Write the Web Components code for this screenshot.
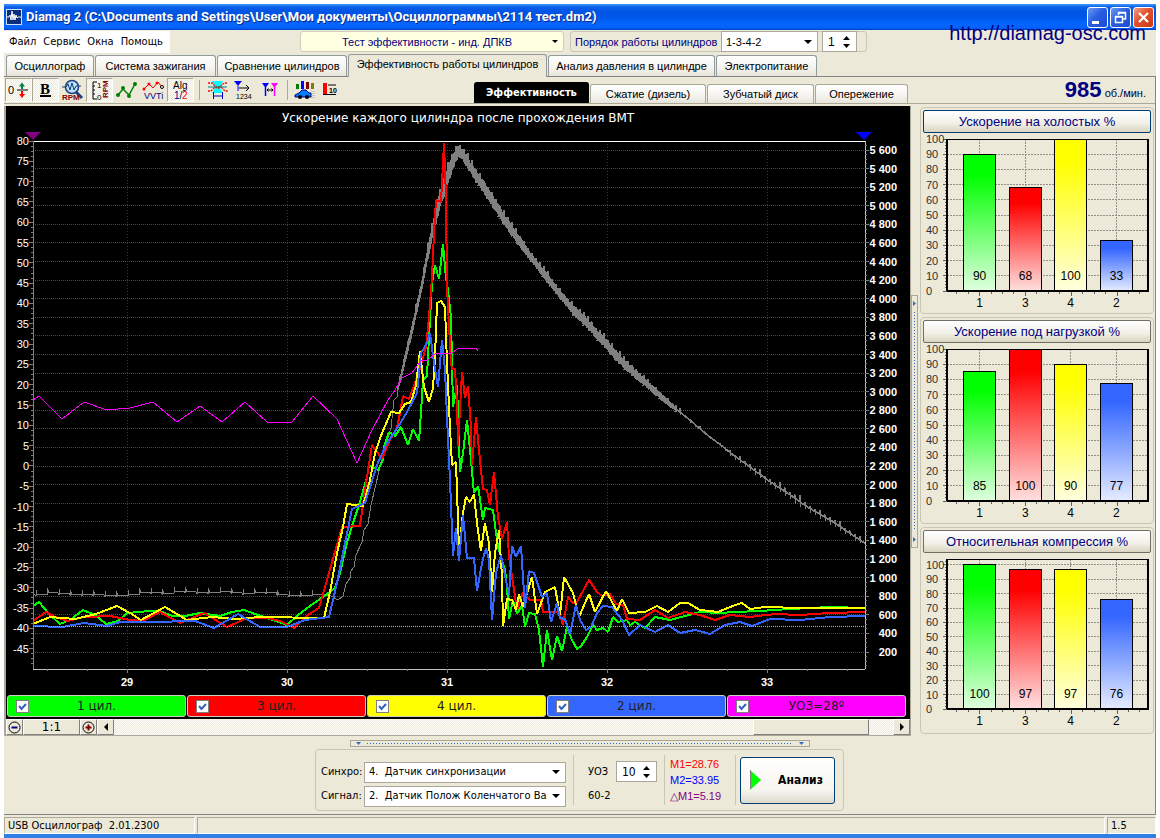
<!DOCTYPE html>
<html lang="ru">
<head>
<meta charset="utf-8">
<title>Diamag 2</title>
<style>
  html, body { margin: 0; background: #fff; }
  body {
    --face: #ece9d8; --line: #aca899; --navy: #000080;
    --tahoma: "DejaVu Sans Condensed", "DejaVu Sans", sans-serif;
    --sans: "Liberation Sans", Arial, sans-serif;
    font: 11px/14px var(--sans); color: #000;
  }
</style>
</head>
<body>
<diamag-app></diamag-app>

<script>
function define(name, css, html, setup) {
  const tpl = document.createElement('template');
  tpl.innerHTML = `<style>*,*::before,*::after{box-sizing:border-box}
    button,select,input{font:inherit;color:inherit;margin:0}
    :host{box-sizing:border-box;display:block}${css}</style>${html}`;
  customElements.define(name, class extends HTMLElement {
    connectedCallback() {
      if (this.shadowRoot) return;
      this.attachShadow({ mode: 'open' }).append(tpl.content.cloneNode(true));
      if (setup) setup(this, this.shadowRoot);
    }
  });
}

/* ---------- title bar ---------- */
define('title-bar', `
  :host{display:flex;align-items:center;gap:4px;height:26px;flex:none;padding:0 2px 0 2px;
    background:linear-gradient(#3f9bff 0,#0b5fe8 3px,#0054e3 8px,#0058ee 14px,#0566ff 20px,#0460f8 24px,#0041c4 26px)}
  .logo{width:16px;height:16px;flex:none}
  h1{flex:1;margin:0;font:bold 13px/18px Roboto,sans-serif;color:#fff;text-shadow:1px 1px 0 #0a2a86;white-space:nowrap;overflow:hidden}
  .btns{display:flex;gap:2px}
  button{width:21px;height:21px;padding:0;border:1px solid #fff;border-radius:3px;background:linear-gradient(135deg,#6c9cf5,#2a5fe0 45%,#1c4bd0)}
  button.close{background:linear-gradient(135deg,#f0a088,#e0502c 45%,#c83a14)}
  button svg{display:block;width:19px;height:19px}`, `
  <svg class="logo" viewBox="0 0 16 16" aria-hidden="true"><rect width="16" height="16" fill="#cfe0f4"/><rect x="1" y="1" width="14" height="14" fill="#0a2f7c"/>
    <path d="M1 8h2l1-2 1 5 1-9 1 9 1-6 1 6 1-5 1 3 1-1h3" fill="none" stroke="#fff" stroke-width="1"/></svg>
  <h1><slot></slot></h1>
  <div class="btns">
    <button aria-label="Свернуть"><svg viewBox="0 0 19 19"><path d="M4 13h7v3H4z" fill="#fff"/></svg></button>
    <button aria-label="Восстановить"><svg viewBox="0 0 19 19"><path d="M7.500 7V4.500h7V11H12M7 5h8M4.500 8.500h7v6h-7zM4 9h8" fill="none" stroke="#fff" stroke-width="1.500"/></svg></button>
    <button class="close" aria-label="Закрыть"><svg viewBox="0 0 19 19"><path d="M5 5l9 9M14 5l-9 9" stroke="#fff" stroke-width="2.200"/></svg></button>
  </div>`);

/* ---------- menu ---------- */
define('menu-bar', `
  :host{display:flex;align-items:center;gap:7px;height:22px;width:166px;padding:0 5px;background:#fff;font-family:var(--tahoma);flex:none}
  button{border:0;background:none;padding:0;line-height:14px;white-space:nowrap}`,
  `<button>Файл</button><button>Сервис</button><button>Окна</button><button>Помощь</button>`);

/* ---------- drop-down ---------- */
define('combo-box', `
  :host{display:flex;position:relative;height:21px;border:1px solid var(--line);background:var(--combo-bg,#fff)}
  :host([rounded]){border-color:#d0cdbd;border-radius:3px;color:var(--navy)}
  select{appearance:none;border:0;outline:0;border-radius:0;background:none;flex:1;min-width:0;height:100%;padding:0 18px 0 4px;text-align-last:var(--combo-align,left);white-space:pre}
  svg{position:absolute;right:5px;top:50%;width:8px;height:4px;margin-top:-2px;pointer-events:none}
  :host([rounded]) svg{width:6px;height:3px}
  :host([rounded]) select{padding-right:14px}`,
  `<select></select><svg viewBox="0 0 8 4" aria-hidden="true"><path d="M0 0h8L4 4z"/></svg>`,
  (host, root) => {
    const s = root.querySelector('select');
    s.append(new Option(host.getAttribute('value')));
    s.setAttribute('aria-label', host.getAttribute('label'));
  });

/* ---------- number box ---------- */
define('spin-box', `
  :host{display:flex;align-items:center;height:21px;border:1px solid var(--line);background:#fff}
  input{appearance:textfield;flex:1;min-width:0;border:0;outline:0;background:none;padding:0 0 0 5px;font-size:12px}
  input::-webkit-inner-spin-button{display:none}
  .arrows{display:flex;flex-direction:column;gap:4px;padding-right:6px}
  button{border:0;background:none;padding:0;width:7px;height:4px;display:block}
  svg{display:block;width:7px;height:4px}`,
  `<input type="number"><div class="arrows">
    <button aria-label="Больше"><svg viewBox="0 0 7 4"><path d="M0 4h7L3.500 0z"/></svg></button>
    <button aria-label="Меньше"><svg viewBox="0 0 7 4"><path d="M0 0h7L3.500 4z"/></svg></button></div>`,
  (host, root) => {
    const i = root.querySelector('input');
    i.value = host.getAttribute('value');
    i.setAttribute('aria-label', host.getAttribute('label'));
    const [up, down] = root.querySelectorAll('button');
    up.onclick = () => i.stepUp(); down.onclick = () => i.stepDown();
  });

/* ---------- tab ---------- */
define('tab-item', `
  :host{display:flex;align-self:flex-end;height:21px;flex:none}
  button{flex:1;border:1px solid #919b9c;border-bottom:0;border-radius:3px 3px 0 0;padding:0;background:linear-gradient(#fff,#f4f3ee 60%,#e6e4da);white-space:nowrap}
  :host([active]){height:23px;margin:0 0 -1px;position:relative;z-index:1}
  :host([active]) button{background:var(--face);padding-bottom:4px}
  :host([sub]){height:19px}
  :host([sub][active]){height:21px;margin:0}
  :host([sub]) button{border-color:var(--line)}
  :host([sub][active]) button{background:#000;color:#fff;font-family:"DejaVu Sans Condensed","DejaVu Sans",sans-serif;font-weight:bold;padding:0;border-color:#000}`,
  `<button role="tab"><slot></slot></button>`);

/* ---------- toolbar ---------- */
const ICONS = {
  offset: `<text x="2" y="15" font-size="11">0</text><path d="M11 11h11" stroke="#000"/><path d="M13 7.500l3-4 3 4z" fill="#008040"/><path d="M16 6v4" stroke="#008040" stroke-width="2"/><path d="M13 15l3 4 3-4z" fill="#f00"/><path d="M16 12v4" stroke="#f00" stroke-width="2"/>`,
  bold: `<text x="7" y="15" font-size="15" font-weight="bold" font-family="Liberation Serif,serif">B</text><path d="M7 17h11" stroke="#000" stroke-width="2"/>`,
  rpmZoom: `<circle cx="12" cy="8" r="6.500" fill="#b8e4ff" stroke="#204080" stroke-width="1.500"/><path d="M2 8h4l2-3 2 6 2-7 2 7 2-4h5" fill="none" stroke="#1a3a70"/><path d="M16 13l6 6" stroke="#204080" stroke-width="3"/><text x="2" y="21" font-size="8" fill="#800000" font-weight="bold">RPM</text>`,
  rpmAxis: `<path d="M10 3H6v17h4M6 7h2M6 11h2M6 15h2" fill="none" stroke="#000"/><text x="10" y="9" font-size="8">1</text><text x="10" y="21" font-size="8">0</text><text transform="translate(21 19) rotate(-90)" font-size="8" fill="#800000" font-weight="bold">RPM</text>`,
  points: `<path d="M4 16l5-6 6 6 6-11" fill="none" stroke="#008000" stroke-width="1.500"/><g fill="#008000"><circle cx="4" cy="16" r="2"/><circle cx="9" cy="9" r="2"/><circle cx="15" cy="17" r="2"/><circle cx="21" cy="5" r="2"/></g>`,
  vvti: `<path d="M3 10l5-5 4 4 5-6 4 5" fill="none" stroke="#f00"/><g fill="#f00"><circle cx="3" cy="10" r="1.500"/><circle cx="8" cy="5" r="1.500"/><circle cx="16" cy="4" r="1.500"/></g><circle cx="21" cy="8" r="1.500" fill="#fff" stroke="#000"/><text x="3" y="20" font-size="9" fill="#000080">VVTi</text>`,
  alg: `<text x="5" y="10" font-size="10">Alg</text><text x="6" y="20" font-size="10" fill="#000080">1/</text><text x="14" y="20" font-size="10" fill="#f00">2</text>`,
  phase: `<path d="M6 2h11l-3 7 3 5H6l3-5z" fill="#0ff"/><path d="M2 4h4l5 5h2l5-5h4M2 12h3l4-4h6l4 4h3" fill="none" stroke="#f00" stroke-width="1.300" stroke-dasharray="2 1"/><path d="M2 8h19" stroke="#008080"/><path d="M7.500 13v7M16.500 13v7M8 17h8" stroke="#0000c0" fill="none"/>`,
  cursor: `<path d="M1 2h8L5 7z" fill="#00f"/><path d="M5 7v5" stroke="#00f"/><path d="M6 9h10M13 6l3 3-3 3" fill="none" stroke="#000"/><text x="3" y="20" font-size="7">1234</text>`,
  cursors: `<path d="M2 4h7L5.500 9z" fill="#00f"/><path d="M5.500 8v9" stroke="#00f" stroke-width="1.500"/><path d="M11 4h7l-3.500 5z" fill="#f0f"/><path d="M14.500 8v9" stroke="#f0f" stroke-width="1.500"/><path d="M7 11h6M8.500 9.500L7 11l1.500 1.500M11.500 9.500L13 11l-1.500 1.500" fill="none" stroke="#000"/>`,
  car: `<path d="M2 5h3v5H2z" fill="#008000"/><path d="M7 2h3v8H7z" fill="#00f"/><path d="M12 3h3v7h-3z" fill="#800000"/><path d="M17 4h3v6h-3z" fill="#808000"/><path d="M1 16l4-2 3-3h4l3 3h2v4H1z" fill="#0080ff" stroke="#000080"/><circle cx="6" cy="18" r="2"/><circle cx="13" cy="18" r="2"/><path d="M18 12v7M20 12v7" stroke="#a0a0a0" stroke-dasharray="1 1"/>`,
  limit: `<path d="M2 4h4v11H2z" fill="#f00"/><path d="M7 6h8M2 15.500h13" stroke="#000"/><text x="8" y="14" font-size="7" font-weight="bold">10</text>`
};
define('tool-button', `
  :host{display:flex;width:27px;height:24px;flex:none}
  button{flex:1;border:1px solid transparent;padding:0;background:none}
  :host([pressed]) button{border-color:var(--line) #fff #fff var(--line);background:repeating-conic-gradient(#fff 0 25%,#ece9d8 0 50%) 0 0/2px 2px}
  svg{display:block;width:24px;height:22px;font-family:"Liberation Sans",sans-serif}`,
  `<button><svg viewBox="0 0 24 22" aria-hidden="true"></svg></button>`,
  (host, root) => {
    root.querySelector('svg').innerHTML = ICONS[host.getAttribute('icon')];
    const b = root.querySelector('button');
    b.setAttribute('aria-label', host.getAttribute('label'));
    b.setAttribute('aria-pressed', host.hasAttribute('pressed'));
  });

/* ---------- oscilloscope plot ---------- */
const CURVES = {
  green: ['#00ff00', '33,606 39,602 50,615 60,624 70,620 83,610 95,615 106,624 118,621 127,613 150,611 160,611 172,616 185,616 200,613 220,616 232,612 244,610 255,614 270,619 287,625 298,615 310,606 323,597 335,588 340,573 347,543 353,523 360,502 367,477 369,465 378,470 383,460 384,447 389,432 395,436 401,427 408,445 413,429 419,441 421,412 422,397 423,380 427,376 429,337 432,283 435,265 439,279 443,244 446,278 448,290 451,317 453,407 457,385 459,443 460,472 463,453 467,420 471,460 474,493 478,486 483,520 485,508 493,510 498,547 505,570 507,587 509,619 513,600 517,614 522,605 525,627 529,613 535,614 539,630 543,667 547,630 552,660 557,636 562,651 567,627 572,640 577,649 581,646 587,637 593,625 597,630 603,628 608,632 613,617 618,622 627,620 630,625 635,622 645,628 655,617 670,620 685,616 700,612 720,613 735,612 760,611 790,609 830,607 865,608'],
  red: ['#ff0000', '33,621 46,612 55,617 68,621 84,617 110,616 130,620 143,621 160,612 180,623 204,613 227,627 247,618 267,618 280,621 294,628 308,615 319,608 327,580 342,527 360,526 365,490 372,445 382,459 390,440 397,428 400,413 403,396 409,399 415,383 420,368 426,347 429,317 432,277 434,233 436,200 441,202 443,163 444,143 446,197 447,287 451,363 452,369 455,369 457,403 458,446 462,372 465,398 468,386 471,428 472,465 476,417 479,450 483,489 487,490 490,505 494,472 498,517 502,539 507,522 509,557 513,583 517,610 523,592 530,600 541,600 543,612 557,612 560,615 563,625 568,597 573,603 577,602 589,580 597,592 602,596 610,594 616,604 623,605 627,619 640,620 655,610 668,618 685,612 700,615 715,620 730,615 750,617 775,614 800,615 830,613 865,612'],
  yellow: ['#ffff00', '33,624 50,617 75,619 96,614 117,606 130,613 141,620 165,607 187,620 212,617 235,619 260,617 324,618 330,592 337,553 343,527 347,504 363,506 370,480 375,453 382,433 391,412 399,413 405,404 411,402 416,385 420,351 424,387 429,402 433,388 435,357 437,303 441,301 445,307 447,363 450,428 452,465 456,462 459,550 463,513 466,497 470,502 474,494 477,523 481,551 485,523 489,543 492,592 495,553 499,530 502,577 503,626 507,599 512,600 516,610 519,594 523,607 532,577 537,614 545,592 555,587 560,615 564,577 573,593 579,617 589,594 595,612 606,591 617,611 622,599 629,613 645,612 657,606 668,612 680,603 688,603 700,610 718,612 735,605 742,603 750,609 765,607 800,608 865,608'],
  blue: ['#3366ff', '33,626 62,627 84,623 107,626 120,622 150,622 195,621 214,628 238,614 260,627 287,627 305,620 329,617 337,583 345,543 352,509 365,503 377,465 387,443 398,427 407,412 417,393 421,353 427,343 430,333 434,363 438,387 442,340 445,370 447,417 450,480 453,556 456,528 459,561 463,515 467,558 474,558 477,591 482,563 486,548 489,560 492,620 496,573 501,555 509,595 512,546 516,557 521,546 525,608 529,571 534,573 542,597 547,593 551,622 557,603 560,618 565,619 570,634 576,605 580,620 586,630 591,627 597,613 603,606 612,607 622,620 629,635 640,625 655,632 668,625 680,633 695,630 710,634 725,625 740,622 752,626 770,619 800,620 830,617 865,616']
};
const TIMING = '33,400 39,396 62,419 84,402 107,410 130,408 153,402 177,422 200,406 222,422 245,402 267,422 292,422 313,396 337,419 357,463 372,430 388,400 395,390 402,378 412,373 421,361 428,360 436,353 452,353 457,349 463,348 467,349 476,348 478,351';

/* engine speed: idle teeth, ramp up, then a ripple that thins out on the way down */
function speedPath() {
  let p = '33,593 ';
  const base = [594,592,593,594,594,594,595,595,594,592,592,593,591,591,592,592,591,592,593,592,592,594,595,595,594];
  base.forEach((y, i) => { const x = 36 + i * 11.5; p += `${x},${y + 2} ${x},${y - 4} ${x + 1},${y} ${x + 5},${y + 1} ${x + 10},${y} `; });
  p += '331,596 338,600 343,596 346,584 350,578 351,571 354,567 356,555 362,542 364,530 368,524 371,505 376,484 380,466 386,445 391,428 394,400 397,397 ';
  const c = [[398,388,3],[402,372,5],[407,350,6],[412,330,6],[417,307,7],[422,285,6],[427,257,8],[432,233,10],[437,210,12],[441,196,12],[447,178,12],[452,163,12],[458,151,9],[463,155,10],[470,167,10],[480,182,9],[490,197,10],[503,218,9],[520,243,9],[533,260,7],[547,278,8],[560,295,7],[573,310,8],[587,323,8],[599,337,8],[605,343,8],[620,360,8],[633,372,7],[650,387,6],[668,403,5],[687,418,3],[707,435,2],[723,447,2],[730,453,4],[747,465,5],[767,480,6],[790,495,7],[807,507,6],[833,522,6],[864,543,4]];
  let k = 0;
  for (let x = 398; x <= 864; x++) {
    while (x > c[k + 1][0]) k++;
    const [x0, y0, h0] = c[k], [x1, y1, h1] = c[k + 1], t = (x - x0) / (x1 - x0);
    const y = y0 + (y1 - y0) * t, h = h0 + (h1 - h0) * t;
    const noise = n => { const v = Math.sin(x * 12.9898 + n * 78.233) * 43758.5453; return v - Math.floor(v); };
    const thin = x > 676 && x % 5, spike = x % 4 === 0 ? 1 : 0.6;
    const up = thin ? 1 : h * spike * (0.7 + noise(1) * 0.4), dn = thin ? 1 : h * (0.5 + noise(2) * 0.3);
    p += `${x},${(y - up).toFixed(1)} ${x},${(y + dn).toFixed(1)} `;
  }
  return p;
}

define('scope-chart', `
  :host{display:flex;flex-direction:column;background:#000;color:#fff;min-height:300px}
  h2{margin:0;font:12px/24px "DejaVu Sans",sans-serif;text-align:center;flex:none}
  .area{flex:1;min-height:0;margin:11px 45px 26px 27px;display:flex;position:relative}
  svg.plot{position:absolute;inset:0;width:100%;height:100%;overflow:visible;font:11px "Liberation Sans",sans-serif}
  line{shape-rendering:crispEdges}
  .r{font-weight:bold}`,
  `<h2><slot></slot></h2><div class="area"><svg class="plot" role="img"></svg></div>`,
  (host, root) => {
    let s = '';
    const line = (x1, y1, x2, y2, c, extra = '') => `<line x1="${x1}" y1="${y1}" x2="${x2}" y2="${y2}" stroke="${c}" ${extra}/>`;
    const X0 = 28.4125, XR = 5.2;
    for (let v = 29; v <= 33; v++) s += line((v - X0) / XR * 100 + '%', 0, (v - X0) / XR * 100 + '%', '100%', '#383838', 'stroke-dasharray="1 2"');
    for (let v = 200; v <= 5600; v += 200) {
      const y = (511 - (v - 200) * 0.09296) / 528 * 100 + '%';
      s += line(0, y, '100%', y, '#484848', 'stroke-dasharray="1 1"');
    }
    s += '<svg x="0" y="0" width="100%" height="100%" viewBox="33 141 832 528" preserveAspectRatio="none">';
    const poly = (pts, c, w) => `<polyline points="${pts}" fill="none" stroke="${c}" stroke-width="${w}" vector-effect="non-scaling-stroke" stroke-linejoin="bevel" shape-rendering="crispEdges"/>`;
    s += poly(speedPath(), '#808080', 1);
    for (const k in CURVES) s += poly(CURVES[k][1], CURVES[k][0], 2);
    s += poly(TIMING, '#ff00ff', 1) + '</svg>';
    s += line(0, '92%', '100%', '92%', '#40e0e0', 'stroke-dasharray="1 1"');
    s += line(0, 0, '100%', 0, '#fff') + line(0, '100%', '100%', '100%', '#c0c0c0');
    s += line(0, 0, 0, '100%', '#40b040') + line('100%', 0, '100%', '100%', '#d0d040');
    for (let i = 0; i <= 104; i++) {
      const y = i / 104 * 100 + '%', major = i % 4 === 0;
      if (i < 104) s += line(major ? -4 : -2, y, 0, y, '#808080');
      if (major && i < 104) s += `<text x="-4" y="${y}" dy="4" text-anchor="end" fill="#fff">${80 - i / 4 * 5}</text>`;
    }
    for (let v = 50; v <= 5650; v += 50) {
      const y = (511 - (v - 200) * 0.09296) / 528 * 100 + '%', major = v % 200 === 0;
      s += `<svg x="100%" y="${y}" overflow="visible">${line(0, 0, major ? 4 : 2, 0, '#808080')}${major ? `<text class="r" x="32" y="4" text-anchor="end" fill="#fff">${String(v).replace(/(\d)(\d{3})$/, '$1 $2')}</text>` : ''}</svg>`;
    }
    for (let i = 0; i <= 20; i++) {
      const v = 28.5 + i * 0.25;
      const x = (v - X0) / XR * 100 + '%', major = v % 1 === 0;
      s += `<svg x="${x}" y="100%" overflow="visible">${line(0, 0, 0, major ? 4 : 2, '#808080')}${major ? `<text class="r" x="0" y="17" text-anchor="middle" fill="#fff">${v}</text>` : ''}</svg>`;
    }
    s += '<path d="M-8-9H8L0-1z" fill="#800080"/><svg x="100%" y="0" overflow="visible"><path d="M-9-9H7L-1-1z" fill="#00f"/></svg>';
    root.querySelector('svg').innerHTML = s;
  });

/* ---------- curve switch ---------- */
define('curve-toggle', `
  :host{flex:1;min-width:0}
  label{display:flex;align-items:center;height:22px;border:1px solid #d0cdc0;border-radius:3px;background:var(--c);padding:0 8px;font:12px/16px "DejaVu Sans",sans-serif;color:#202020}
  input{appearance:none;width:13px;height:13px;border:1px solid #808080;background:#fff;flex:none}
  input:checked{background:#fff url("data:image/svg+xml,%3Csvg xmlns='http://www.w3.org/2000/svg' viewBox='0 0 11 11'%3E%3Cpath d='M2 5l2.500 3L9 3' fill='none' stroke='%233060c0' stroke-width='2'/%3E%3C/svg%3E")}
  span{flex:1;text-align:center;padding-right:13px}`,
  `<label><input type="checkbox" checked><span><slot></slot></span></label>`);

/* ---------- scrollbar row ---------- */
define('time-scroller', `
  :host{display:flex;height:17px;border-bottom:1px solid var(--line);background:repeating-conic-gradient(#fff 0 25%,#ece9d8 0 50%) 0 0/2px 2px;flex:none}
  button{padding:0;height:16px;border:1px solid;border-color:#fff #808080 #808080 #fff;background:var(--face);width:17px;flex:none;display:grid;place-items:center}
  .ratio{width:57px;font:12px/14px "DejaVu Sans",sans-serif}
  .thumb{width:116px;margin-right:24px}.gap{flex:1}
  svg{display:block}`,
  `<button aria-label="Сжать"><svg width="13" height="13" viewBox="0 0 13 13"><circle cx="6.500" cy="6.500" r="5.500" fill="none" stroke="#000"/><path d="M3.500 6.500h6" stroke="#000080" stroke-width="2"/></svg></button>
   <button class="ratio">1:1</button>
   <button aria-label="Растянуть"><svg width="13" height="13" viewBox="0 0 13 13"><circle cx="6.500" cy="6.500" r="5.500" fill="none" stroke="#000"/><path d="M3.500 6.500h6M6.500 3.500v6" stroke="#800000" stroke-width="2"/></svg></button>
   <button aria-label="Влево"><svg width="4" height="8" viewBox="0 0 4 8"><path d="M4 0v8L0 4z"/></svg></button>
   <span class="gap"></span><button class="thumb" aria-label="Позиция"></button>
   <button aria-label="Вправо"><svg width="4" height="8" viewBox="0 0 4 8"><path d="M0 0v8l4-4z"/></svg></button>`);

/* ---------- collapsible splitter grips ---------- */
define('split-grip', `
  :host{display:flex;align-items:center;justify-content:space-between;gap:6px;border:1px solid var(--line);color:#316ac5}
  :host([vertical]){flex-direction:column;width:7px;height:253px;padding:5px 0}
  :host(:not([vertical])){height:7px;width:460px;padding:0 5px}
  i{flex:1;background:repeating-linear-gradient(90deg,#316ac5 0 1px,transparent 1px 3px);height:1px}
  :host([vertical]) i{background:repeating-linear-gradient(#316ac5 0 1px,transparent 1px 3px);width:1px;height:auto}
  svg{display:block;width:5px;height:5px;fill:#316ac5;overflow:visible}`,
  `<svg viewBox="0 0 5 5"><path/></svg><i></i><svg viewBox="0 0 5 5"><path/></svg>`,
  (host, root) => root.querySelectorAll('path').forEach(p =>
    p.setAttribute('d', host.hasAttribute('vertical') ? 'M1 0v5l3-2.500z' : 'M0 1h5L2.500 4z')));

/* ---------- bar chart card ---------- */
define('bar-panel', `
  :host{border:1px solid #c9c6b6;border-radius:4px;padding:2px;height:207px}
  button{display:block;width:100%;height:23px;border:1px solid var(--edge,#716f64);border-radius:2px;background:linear-gradient(#fff,#f1efe6 60%,#d9d5c0);color:var(--navy);font-size:13px;padding:0}
  .area{position:relative;height:var(--plot-h,152px);margin:6px 3px 0 24px}
  svg.plot{position:absolute;inset:0;width:100%;height:100%;overflow:visible;font:12px "Liberation Sans",sans-serif}
  .s{font-size:11px;fill:#303030}
  line{shape-rendering:crispEdges}`,
  `<button></button><div class="area"><svg class="plot" role="img"></svg></div>`,
  (host, root) => {
    root.querySelector('button').textContent = host.getAttribute('caption');
    const vals = host.getAttribute('values').split(',').map(Number), max = +host.getAttribute('max') || 100;
    const colors = ['#00ff00', '#ff0000', '#ffff00', '#3366ff'], ends = ['#e0ffe0', '#ffe0e0', '#ffffe0', '#e6ecff'];
    const cx = [16.2, 39, 61.5, 84.3], names = [1, 3, 4, 2];
    let s = '<defs>' + colors.map((c, i) => `<linearGradient id="g${i}" x2="0" y2="1"><stop stop-color="${c}"/><stop offset=".15" stop-color="${c}"/><stop offset="1" stop-color="${ends[i]}"/></linearGradient>`).join('') + '</defs>';
    for (let v = 0; v <= 100; v += 10) {
      const y = 100 - v / max * 100 + '%';
      if (v) s += `<line x1="0" x2="100%" y1="${y}" y2="${y}" stroke="#909088" stroke-dasharray="2 1"/>`;
      s += `<line x1="-4" x2="0" y1="${y}" y2="${y}" stroke="#606060"/><text class="s" x="-21" y="${y}" dy="4">${v}</text>`;
    }
    for (let v = 2; v < max; v += 2) { const y = 100 - v / max * 100 + '%'; s += `<line x1="-2" x2="0" y1="${y}" y2="${y}" stroke="#606060"/>`; }
    for (let i = 0; i < 17; i++) { const x = 4.800 + i * 5.700; if (x < 100) s += `<svg x="${x}%" y="100%" overflow="visible"><line y2="${i % 4 === 2 ? 5 : 3}" stroke="#606060"/></svg>`; }
    cx.forEach(x => s += `<line x1="${x}%" x2="${x}%" y1="0" y2="100%" stroke="#909088" stroke-dasharray="2 1"/>`);
    vals.forEach((v, i) => {
      const h = v / max * 100;
      s += `<rect x="${cx[i] - 8}%" width="16%" y="${100 - h}%" height="${h}%" fill="url(#g${i})" stroke="#000" shape-rendering="crispEdges"/>`;
      s += `<svg x="${cx[i]}%" y="100%" overflow="visible"><text y="-11" text-anchor="middle">${v}</text><text y="16" text-anchor="middle">${names[i]}</text></svg>`;
    });
    s += '<rect width="100%" height="100%" fill="none" stroke="#000" shape-rendering="crispEdges"/><line y2="100%" stroke="#000" stroke-width="2"/><line x1="100%" x2="100%" y2="100%" stroke="#000" stroke-width="2"/><line x2="100%" y1="100%" y2="100%" stroke="#000" stroke-width="2"/>';
    root.querySelector('svg').innerHTML = s;
  });

/* ---------- sync controls ---------- */
define('sync-box', `
  :host{display:flex;align-items:center;border:1px solid #c9c6b6;border-radius:4px;width:529px;height:62px;padding:0 8px 0 5px}
  .pairs{display:grid;grid-template-columns:40px 202px;gap:3px;align-items:center;font-family:var(--tahoma);margin-top:8px}
  hr{width:1px;height:50px;margin:0 4px 0 7px;border:0;background:#c9c6b6}
  .adv{display:grid;grid-template-columns:28px 41px;align-items:center;row-gap:7px;margin:4px 0 0 10px;font-family:var(--tahoma)}
  .marks{margin:0;padding:0 0 0 1px;list-style:none;line-height:16px;width:60px;white-space:nowrap}
  .run{display:flex;align-items:center;gap:17px;width:96px;height:47px;padding:0 9px;border:1px solid #003c74;border-radius:3px;background:linear-gradient(#fff,#f6f5f0 70%,#dedbcc);font:bold 12px var(--tahoma)}`,
  `<div class="pairs"><span>Синхро:</span><combo-box label="Синхро" value="4.&nbsp; Датчик синхронизации"></combo-box>
    <span>Сигнал:</span><combo-box label="Сигнал" value="2.&nbsp; Датчик Полож Коленчатого Вала"></combo-box></div>
   <hr><div class="adv"><span>УОЗ</span><spin-box label="УОЗ" value="10"></spin-box><span>60-2</span></div>
   <hr><ul class="marks"><li style="color:#f00">M1=28.76</li><li style="color:#00f">M2=33.95</li><li style="color:#800080">△M1=5.19</li></ul>
   <hr><button class="run"><svg width="11" height="20" viewBox="0 0 11 20"><path d="M0 0v20l11-10z" fill="#0f0"/><path d="M.500 0v19" stroke="#808080"/></svg>Анализ</button>`);

/* ---------- status bar ---------- */
define('status-bar', `
  :host{display:flex;gap:2px;height:17px;flex:none;font-family:var(--tahoma)}
  span{border:1px solid;border-color:var(--line) #fff #fff var(--line);padding:0 3px;white-space:pre;line-height:16px}
  .a{width:191px}.b{flex:1}.c{width:49px}`,
  `<span class="a">USB Осциллограф  2.01.2300</span><span class="b"></span><span class="c">1.5</span>`);

/* ---------- window ---------- */
define('diamag-app', `
  :host{display:flex;flex-direction:column;min-height:100vh;padding:4px 4px 0;position:relative}
  .body{flex:1;display:flex;flex-direction:column;background:var(--face);border-bottom:4px solid #2f7fe6}
  .top{display:flex;align-items:flex-start;padding-top:1px;height:24px}
  .test{width:264px;margin:0 6px 0 130px}
  .order{display:flex;align-items:center;border:1px solid #c9c6b6;border-radius:3px;height:21px;color:var(--navy);padding-right:9px}
  .order span{width:150px;padding-left:4px;white-space:nowrap}
  .order combo-box{width:97px;color:#000;margin-right:4px}
  .order spin-box{width:35px;color:#000}
  .site{position:absolute;right:14px;top:21px;font-size:20px;line-height:24px;color:var(--navy);text-decoration:none}
  .tabs{display:flex;gap:1px;height:22px;padding-left:2px}
  .page{flex:1;display:flex;flex-direction:column;border:solid #848484;border-width:1px 1px 1px 0;margin-bottom:2px}
  .tools{display:flex;align-items:center;height:27px;padding-left:1px;border-bottom:1px solid var(--line)}
  .tools u{width:1px;height:20px;background:var(--line);margin:0 5px}
  .tools .close{margin:0 5px 0 1px}
  .sub{display:flex;gap:1px;align-self:flex-end;margin-left:127px}
  .rpm{margin-left:auto;padding-right:9px;color:var(--navy);white-space:nowrap}
  .rpm b{font-size:22px;line-height:24px}.rpm span{color:#000040}
  .work{flex:1;display:flex;padding-top:2px}
  .left{flex:1;min-width:0;display:flex;flex-direction:column;border-left:2px solid var(--line);border-right:1px solid var(--line)}
  scope-chart{flex:1}
  .legend{display:flex;gap:1px;background:#000;padding:0 4px 2px 1px}
  .grip{display:flex;align-items:center}
  .cards{width:234px;margin:1px 1px 0 2px;display:flex;flex-direction:column;gap:3px}
  .dock{display:flex;flex-direction:column;align-items:center;gap:2px;padding:4px 0 3px}`,
  `<title-bar>Diamag 2 (C:\\Documents and Settings\\User\\Мои документы\\Осциллограммы\\2114 тест.dm2)</title-bar>
  <a class="site" href="http://diamag-osc.com">http://diamag-osc.com</a>
  <div class="body">
    <div class="top"><menu-bar></menu-bar>
      <combo-box class="test" rounded style="--combo-bg:#ffffe1;--combo-align:center" label="Тест" value="Тест эффективности - инд. ДПКВ"></combo-box>
      <div class="order"><span>Порядок работы цилиндров</span><combo-box label="Порядок работы цилиндров" value="1-3-4-2"></combo-box><spin-box label="Цилиндр" value="1"></spin-box></div>
    </div>
    <div class="tabs" role="tablist">
      <tab-item style="width:88px">Осциллограф</tab-item><tab-item style="width:121px">Система зажигания</tab-item><tab-item style="width:130px">Сравнение цилиндров</tab-item><tab-item active style="width:199px">Эффективность работы цилиндров</tab-item><tab-item style="width:167px">Анализ давления в цилиндре</tab-item><tab-item style="width:101px">Электропитание</tab-item>
    </div>
    <div class="page">
      <div class="tools">
        <tool-button icon="offset" label="Смещение" pressed></tool-button><tool-button icon="bold" label="Жирные линии" pressed></tool-button><tool-button icon="rpmZoom" label="Масштаб оборотов"></tool-button><tool-button icon="rpmAxis" label="Ось оборотов" pressed></tool-button><tool-button icon="points" label="Точки"></tool-button><tool-button icon="vvti" label="VVTi"></tool-button><tool-button icon="alg" label="Алгоритм" pressed></tool-button><u></u>
        <tool-button icon="phase" label="Фаза"></tool-button><tool-button icon="cursor" label="Маркер"></tool-button><tool-button icon="cursors" label="Маркеры"></tool-button><u class="close"></u>
        <tool-button icon="car" label="Автомобиль"></tool-button><tool-button icon="limit" label="Порог"></tool-button>
        <div class="sub" role="tablist"><tab-item sub active style="width:115px">Эффективность</tab-item><tab-item sub style="width:116px">Сжатие (дизель)</tab-item><tab-item sub style="width:107px">Зубчатый диск</tab-item><tab-item sub style="width:93px">Опережение</tab-item></div>
        <div class="rpm"><b>985</b> <span>об./мин.</span></div>
      </div>
      <div class="work">
        <div class="left">
          <scope-chart>Ускорение каждого цилиндра после прохождения ВМТ</scope-chart>
          <div class="legend">
            <curve-toggle style="--c:#00ff00">1 цил.</curve-toggle><curve-toggle style="--c:#ff0000">3 цил.</curve-toggle><curve-toggle style="--c:#ffff00">4 цил.</curve-toggle><curve-toggle style="--c:#3366ff">2 цил.</curve-toggle><curve-toggle style="--c:#ff00ff">УОЗ=28º</curve-toggle>
          </div>
          <time-scroller></time-scroller>
        </div>
        <div class="grip"><split-grip vertical></split-grip></div>
        <div class="cards">
          <bar-panel style="--edge:#003c74" caption="Ускорение на холостых %" values="90,68,100,33"></bar-panel>
          <bar-panel caption="Ускорение под нагрузкой %" values="85,100,90,77"></bar-panel>
          <bar-panel style="--plot-h:150px" caption="Относительная компрессия %" values="100,97,97,76" max="104"></bar-panel>
        </div>
      </div>
      <div class="dock"><split-grip></split-grip><sync-box></sync-box></div>
    </div>
    <status-bar></status-bar>
  </div>`);
</script>
</body>
</html>
